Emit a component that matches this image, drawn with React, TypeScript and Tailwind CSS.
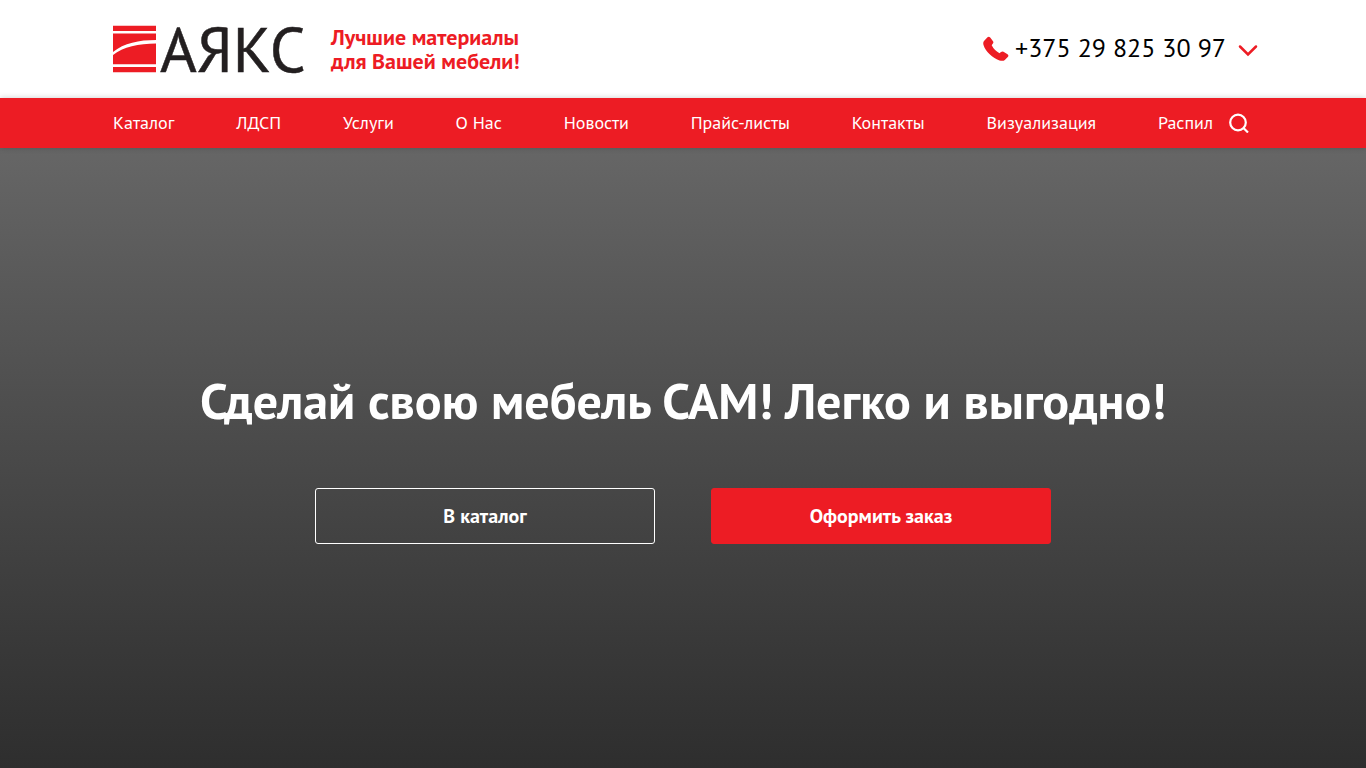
import { useState } from 'react'

type NavItem = {
  label: string
  href: string
}

const NAV: NavItem[] = [
  { label: 'Каталог', href: '#catalog' },
  { label: 'ЛДСП', href: '#ldsp' },
  { label: 'Услуги', href: '#services' },
  { label: 'О Нас', href: '#about' },
  { label: 'Новости', href: '#news' },
  { label: 'Прайс-листы', href: '#prices' },
  { label: 'Контакты', href: '#contacts' },
  { label: 'Визуализация', href: '#visual' },
  { label: 'Распил', href: '#cutting' },
]

function Logo() {
  return (
    <svg className="block h-12 w-[191px] overflow-visible" viewBox="0 0 191 48" role="img" aria-label="АЯКС">
      <path d="M0 0.700h43v5.300H0zM0 8.500h43v6.500C26 15 11 18 0 27zM0 30C10 22 26 18.500 43 18.500V39.300H0zM0 42h43v5.300H0z" fill="#ed1c24" />
      <text
        x="47"
        y="47"
        fontSize="63"
        fill="#231f20"
        stroke="#231f20"
        strokeWidth="0.500"
        className="font-['PT_Sans','Noto_Sans',sans-serif]"
      >
        АЯКС
      </text>
    </svg>
  )
}

function Header() {
  const [open, setOpen] = useState(false)

  return (
    <header className="bg-white">
      <div className="mx-auto flex h-[98px] max-w-[1150px] items-center justify-between pl-[5px]">
        <div className="flex items-center gap-[27px]">
          <a href="#home">
            <Logo />
          </a>
          <p className="text-[22px] leading-6 font-bold text-[#ed1c24]">
            Лучшие материалы
            <br />
            для Вашей мебели!
          </p>
        </div>
        <div className="flex items-center">
          <svg className="mr-1.5 size-[26px]" viewBox="0 0 26 26" fill="#ed1c24" aria-hidden="true">
            <path d="M1 5L4.500 1.200Q6 0.200 7.200 1.600L10 5.200Q10.800 6.500 9.900 7.600L8.700 9.200Q11 14 16.500 17.200L18 16Q19.200 15.200 20.500 15.700L24.500 18.200Q26 19.300 25 20.700L21.800 24Q20 25.500 16.500 24.400C9 21.500 2.500 15.500 0.500 9Q-0.200 6.500 1 5z" />
          </svg>
          <a href="tel:+375298253097" className="pb-0.5 text-[26px] leading-9 text-black">
            +375 29 825 30 97
          </a>
          <button
            type="button"
            aria-label="Другие телефоны"
            aria-expanded={open}
            onClick={() => setOpen(!open)}
            className="ml-3 cursor-pointer"
          >
            <svg className="block size-5" viewBox="0 0 20 20" fill="none" stroke="#ed1c24" strokeWidth="2.500" strokeLinecap="round" aria-hidden="true">
              <path d="M2 7.500l8 8 8-8" />
            </svg>
          </button>
        </div>
      </div>
    </header>
  )
}

function Nav() {
  return (
    <nav className="relative bg-[#ed1c24] shadow-[0_0_6px_rgba(0,0,0,0.2)]">
      <div className="mx-auto flex h-[50px] max-w-[1140px] items-center gap-4">
        <ul className="flex flex-1 items-center justify-between text-lg text-white">
          {NAV.map((item) => (
            <li key={item.href}>
              <a href={item.href} className="hover:underline">
                {item.label}
              </a>
            </li>
          ))}
        </ul>
        <button type="button" aria-label="Поиск" className="mr-1 cursor-pointer">
          <svg className="block size-5" viewBox="0 0 20 20" fill="none" stroke="#fff" strokeWidth="2.200" aria-hidden="true">
            <circle cx="9" cy="9.500" r="7.800" />
            <path d="M14.500 15l4.500 4.500" />
          </svg>
        </button>
      </div>
    </nav>
  )
}

function Hero() {
  return (
    <main className="flex flex-1 flex-col items-center justify-center bg-linear-to-b from-[#666] to-[#2e2e2e] text-white">
      <h1 className="text-center text-[50px] leading-[58px] font-bold">
        Сделай свою мебель САМ! Легко и выгодно!
      </h1>
      <div className="mt-[58px] flex gap-14 text-center text-xl leading-[54px] font-bold">
        <a href="#catalog" className="w-[340px] rounded-[3px] border border-white">
          В каталог
        </a>
        <a href="#order" className="w-[340px] rounded-[3px] border border-[#ed1c24] bg-[#ed1c24]">
          Оформить заказ
        </a>
      </div>
    </main>
  )
}

export default function App() {
  return (
    <div className="flex min-h-screen flex-col font-['PT_Sans','Noto_Sans',sans-serif]">
      <Header />
      <Nav />
      <Hero />
    </div>
  )
}
